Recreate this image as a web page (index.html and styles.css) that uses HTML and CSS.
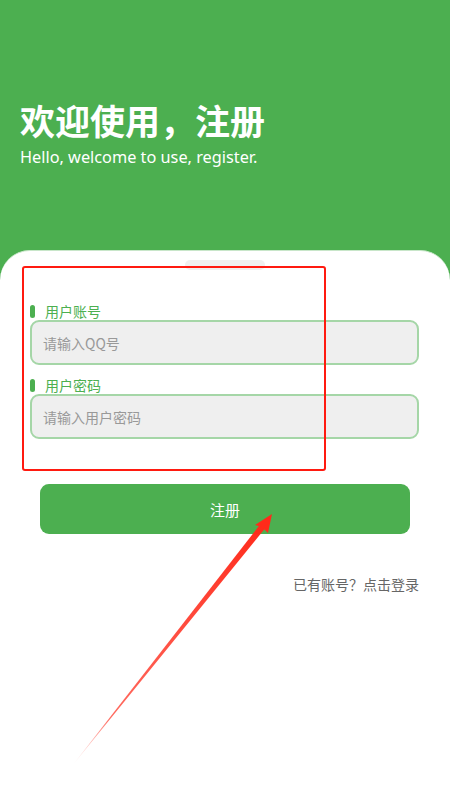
FILE: index.html
```html
<!DOCTYPE html>
<html lang="zh-CN">
<head>
    <meta charset="UTF-8">
    <meta name="viewport" content="width=device-width, initial-scale=1.0">
    <title>注册</title>
    <link rel="stylesheet" href="styles.css">
</head>
<body>
    <div class="page">
        <div class="header">
            <h1 class="title">欢迎使用，注册</h1>
            <p class="subtitle">Hello, welcome to use, register.</p>
        </div>
        <div class="card">
            <div class="handle"></div>
            <div class="form">
                <div class="field">
                    <label class="field-label" for="qq">用户账号</label>
                    <input class="field-input" id="qq" type="text" placeholder="请输入QQ号">
                </div>
                <div class="field">
                    <label class="field-label" for="pwd">用户密码</label>
                    <input class="field-input" id="pwd" type="password" placeholder="请输入用户密码">
                </div>
            </div>
            <button class="submit-btn">注册</button>
            <div class="login-link">已有账号？点击登录</div>
        </div>

        <!-- annotation drawn over the screenshot -->
        <svg class="annotation" width="450" height="800" viewBox="0 0 450 800">
            <defs>
                <linearGradient id="arrowFade" x1="72" y1="766" x2="265" y2="522" gradientUnits="userSpaceOnUse">
                    <stop offset="0" stop-color="#ff2a1a" stop-opacity="0"></stop>
                    <stop offset="0.2" stop-color="#ff2a1a" stop-opacity="0.7"></stop>
                    <stop offset="1" stop-color="#ff2a1a"></stop>
                </linearGradient>
            </defs>
            <rect x="23" y="267" width="302" height="203" rx="2" fill="none" stroke="#ff1a10" stroke-width="2"></rect>
            <polygon points="72,766 262,522 267,526" fill="url(#arrowFade)"></polygon>
            <polygon points="272,514 268,533 262,527 255,525" fill="#ff2a1a"></polygon>
        </svg>
    </div>
</body>
</html>
```

FILE: styles.css
```css
body {
    margin: 0;
    padding: 0;
    font-family: "Noto Sans", "Noto Sans CJK SC", sans-serif;
}

.page {
    position: relative;
    width: 450px;
    min-height: 800px;
    background: linear-gradient(#4caf50 0, #4caf50 300px, #fff 300px);
    overflow: hidden;
}

.header {
    height: 250px;
    box-sizing: border-box;
    padding: 100px 20px 0 20px;
    color: #fff;
}

.title {
    margin: 0;
    font-size: 35px;
    line-height: 40px;
    font-weight: 700;
    font-family: "Noto Sans CJK SC", sans-serif;
}

.subtitle {
    margin: 6px 0 0 0;
    font-size: 16.3px;
    line-height: 22px;
}

.card {
    background-color: #fff;
    border-radius: 30px 30px 0 0;
    border-top: 1px solid #c8e6c9;
    min-height: 550px;
    box-sizing: border-box;
    padding: 9px 31px 0 30px;
}

.handle {
    width: 80px;
    height: 10px;
    margin: 0 auto;
    border-radius: 5px;
    background-color: #f0f0f0;
}

.form {
    display: flex;
    flex-direction: column;
    gap: 11px;
    margin-top: 32px;
}

.field {
    display: flex;
    flex-direction: column;
}

.field-label {
    display: flex;
    align-items: center;
    gap: 10px;
    font-size: 14px;
    line-height: 18px;
    color: #4caf50;
    font-family: "Noto Sans CJK SC", sans-serif;
}

.field-label::before {
    content: "";
    width: 5px;
    height: 13px;
    border-radius: 3px;
    background-color: #4caf50;
}

.field-input {
    height: 45px;
    box-sizing: border-box;
    border: 2px solid #a5d6a7;
    border-radius: 9px;
    background-color: #efefef;
    padding: 0 11px;
    font-size: 14px;
    font-family: "Noto Sans CJK SC", sans-serif;
    outline: none;
}

.field-input::placeholder {
    color: #999;
}

.submit-btn {
    display: block;
    width: 370px;
    height: 50px;
    margin: 45px 0 0 10px;
    border: none;
    border-radius: 9px;
    background-color: #4caf50;
    color: #fff;
    font-size: 15px;
    font-family: "Noto Sans CJK SC", sans-serif;
}

.login-link {
    margin-top: 40px;
    text-align: right;
    font-size: 14px;
    line-height: 20px;
    color: #666;
    font-family: "Noto Sans CJK SC", sans-serif;
}

.annotation {
    position: absolute;
    left: 0;
    top: 0;
    pointer-events: none;
}
```
